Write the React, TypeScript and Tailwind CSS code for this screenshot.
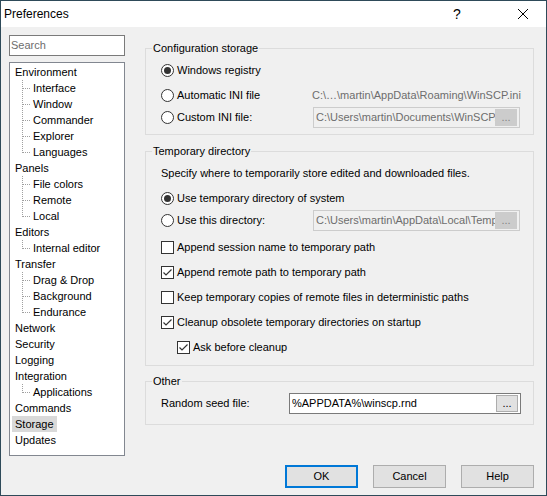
import type { ReactNode } from 'react'

// Preferences dialog (WinSCP style), Storage page

type TreeNode = { label: string; children?: string[] }

const TREE: TreeNode[] = [
  { label: 'Environment', children: ['Interface', 'Window', 'Commander', 'Explorer', 'Languages'] },
  { label: 'Panels', children: ['File colors', 'Remote', 'Local'] },
  { label: 'Editors', children: ['Internal editor'] },
  { label: 'Transfer', children: ['Drag & Drop', 'Background', 'Endurance'] },
  { label: 'Network' },
  { label: 'Security' },
  { label: 'Logging' },
  { label: 'Integration', children: ['Applications'] },
  { label: 'Commands' },
  { label: 'Storage' },
  { label: 'Updates' },
]

const SELECTED = 'Storage'

function Connector({ last }: { last: boolean }) {
  return (
    <svg width="20" height="16" viewBox="0 0 20 16" shapeRendering="crispEdges" className="shrink-0">
      <line x1="12.5" y1="0" x2="12.5" y2={last ? 9 : 16} stroke="#a0a0a0" strokeDasharray="1 1" />
      <line x1="13" y1="8.5" x2="22" y2="8.5" stroke="#a0a0a0" strokeDasharray="1 1" />
    </svg>
  )
}

function Tree() {
  return (
    <div className="mt-[6px] h-[394px] w-[116px] border border-[#828790] bg-white pt-[1px]">
      {TREE.map((node) => (
        <div key={node.label}>
          <div className="ml-[2px] flex h-[16px] items-center">
            <span
              className={
                'px-[3px] leading-[16px] ' + (node.label === SELECTED ? 'bg-[#d9d9d9]' : '')
              }
            >
              {node.label}
            </span>
          </div>
          {node.children?.map((child, i) => (
            <div key={child} className="flex h-[16px] items-center">
              <Connector last={i === node.children!.length - 1} />
              <span className="px-[3px] leading-[16px]">{child}</span>
            </div>
          ))}
        </div>
      ))}
    </div>
  )
}

function Radio({ checked, children }: { checked?: boolean; children: ReactNode }) {
  return (
    <label className="flex items-center gap-[3px] whitespace-nowrap">
      <span className="flex h-[13px] w-[13px] shrink-0 items-center justify-center rounded-full border border-[#333333] bg-white">
        {checked && <span className="h-[7px] w-[7px] rounded-full bg-[#333333]" />}
      </span>
      <span>{children}</span>
    </label>
  )
}

function Check({ checked, children }: { checked?: boolean; children: ReactNode }) {
  return (
    <label className="flex items-center gap-[3px] whitespace-nowrap">
      <span className="flex h-[13px] w-[13px] shrink-0 items-center justify-center border border-[#333333] bg-white">
        {checked && (
          <svg width="11" height="11" viewBox="0 0 11 11">
            <path d="M1.5 5.5 L4 8 L9.5 2.5" fill="none" stroke="#333333" strokeWidth="1.2" />
          </svg>
        )}
      </span>
      <span>{children}</span>
    </label>
  )
}

function PathEdit({ value, disabled, width }: { value: string; disabled?: boolean; width: string }) {
  return (
    <div
      className={
        'flex h-[21px] shrink-0 items-center border pl-[2px] pr-[2px] ' +
        width +
        (disabled ? ' border-[#cccccc] bg-[#f0f0f0] text-[#6d6d6d]' : ' border-[#7a7a7a] bg-white')
      }
    >
      <span className="min-w-0 flex-1 overflow-hidden whitespace-nowrap leading-[17px]">{value}</span>
      <span
        className={
          'flex h-[17px] w-[22px] shrink-0 items-center justify-center leading-none ' +
          (disabled ? 'bg-[#cccccc] text-[#838383]' : 'border border-[#adadad] bg-[#e1e1e1] text-black')
        }
      >
        ...
      </span>
    </div>
  )
}

function Group({ title, className, children }: { title: string; className?: string; children: ReactNode }) {
  return (
    <fieldset className={'min-w-0 border border-[#dcdcdc] ' + (className ?? '')}>
      <legend className="ml-[6px] px-[1px] leading-[16px]">{title}</legend>
      <div className="flex flex-col pl-[15px] pr-[13px]">{children}</div>
    </fieldset>
  )
}

function DialogButton({ children, focused }: { children: ReactNode; focused?: boolean }) {
  return (
    <button
      type="button"
      className={
        'h-[23px] w-[73px] bg-[#e1e1e1] ' +
        (focused ? 'border-2 border-[#0078d7]' : 'border border-[#adadad]')
      }
    >
      {children}
    </button>
  )
}

export default function App() {
  return (
    <div className="flex h-[496px] w-[547px] flex-col border border-[#2e4a59] bg-[#f0f0f0] font-['Liberation_Sans',Arial,sans-serif] text-[11px] text-black">
      {/* title bar */}
      <div className="flex h-[26px] shrink-0 items-center bg-white pl-[3px]">
        <span className="flex-1 text-[12px]">Preferences</span>
        <span className="w-[20px] text-center text-[14px]">?</span>
        <span className="ml-[46px] mr-[13px] flex w-[20px] justify-center">
          <svg width="12" height="12" viewBox="0 0 12 12">
            <path d="M1 1 L11 11 M11 1 L1 11" stroke="#000" strokeWidth="1" />
          </svg>
        </span>
      </div>

      <div className="flex flex-1 flex-col">
        <div className="flex pt-[8px]">
          {/* left column */}
          <div className="ml-[8px] flex w-[116px] flex-col">
            <div className="flex h-[21px] items-center border border-[#7a7a7a] bg-white pl-[1px] text-[#6d6d6d]">
              Search
            </div>
            <Tree />
          </div>

          {/* right column */}
          <div className="ml-[20px] mt-[5px] flex w-[389px] flex-col">
            <Group title="Configuration storage" className="pb-[6px]">
              <div className="mt-[4px] flex h-[20px] items-center">
                <Radio checked>Windows registry</Radio>
              </div>
              <div className="mt-[5px] flex h-[20px] items-center">
                <div className="w-[151px] shrink-0">
                  <Radio>Automatic INI file</Radio>
                </div>
                <span className="whitespace-nowrap text-[#6d6d6d]">C:\…\martin\AppData\Roaming\WinSCP.ini</span>
              </div>
              <div className="mt-[2px] flex h-[21px] items-center">
                <div className="w-[152px] shrink-0">
                  <Radio>Custom INI file:</Radio>
                </div>
                <PathEdit disabled width="w-[207px]" value="C:\Users\martin\Documents\WinSCP.ini" />
              </div>
            </Group>

            <Group title="Temporary directory" className="mt-[8px] pb-[8px]">
              <div className="mt-[6px] flex h-[16px] items-center whitespace-nowrap">
                Specify where to temporarily store edited and downloaded files.
              </div>
              <div className="mt-[7px] flex h-[20px] items-center">
                <Radio checked>Use temporary directory of system</Radio>
              </div>
              <div className="mt-[2px] flex h-[21px] items-center">
                <div className="w-[152px] shrink-0">
                  <Radio>Use this directory:</Radio>
                </div>
                <PathEdit disabled width="w-[207px]" value="C:\Users\martin\AppData\Local\Temp" />
              </div>
              <div className="mt-[6px] flex h-[20px] items-center">
                <Check>Append session name to temporary path</Check>
              </div>
              <div className="mt-[5px] flex h-[20px] items-center">
                <Check checked>Append remote path to temporary path</Check>
              </div>
              <div className="mt-[5px] flex h-[20px] items-center">
                <Check>Keep temporary copies of remote files in deterministic paths</Check>
              </div>
              <div className="mt-[5px] flex h-[20px] items-center">
                <Check checked>Cleanup obsolete temporary directories on startup</Check>
              </div>
              <div className="mt-[5px] flex h-[20px] items-center pl-[16px]">
                <Check checked>Ask before cleanup</Check>
              </div>
            </Group>

            <Group title="Other" className="mt-[7px] pb-[10px]">
              <div className="mt-[4px] flex h-[21px] items-center">
                <span className="w-[128px] shrink-0">Random seed file:</span>
                <PathEdit width="w-[232px]" value="%APPDATA%\winscp.rnd" />
              </div>
            </Group>
          </div>
        </div>

        {/* buttons */}
        <div className="mt-[9px] flex justify-end gap-[15px] pr-[12px]">
          <DialogButton focused>OK</DialogButton>
          <DialogButton>Cancel</DialogButton>
          <DialogButton>Help</DialogButton>
        </div>
      </div>
    </div>
  )
}
